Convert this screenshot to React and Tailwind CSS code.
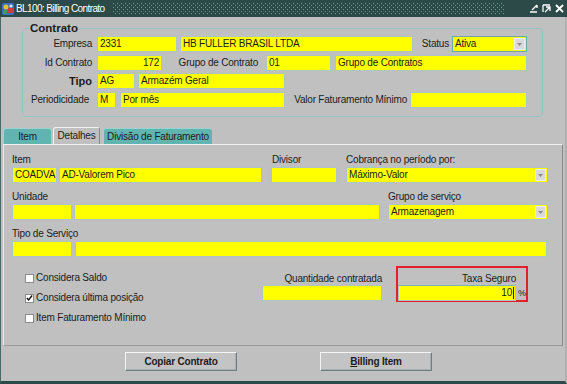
import React from "react";

const fieldBase =
  "h-[16px] bg-[#ffff00] border border-[#b0c4c4] flex items-center px-[2px] leading-none whitespace-nowrap overflow-hidden";

function Field({ className = "", children }) {
  return <div className={`${fieldBase} ${className}`}>{children}</div>;
}

function Select({ className = "", children, outline = "border-[#b0c4c4]" }) {
  return (
    <div
      className={`h-[16px] bg-[#ffff00] border ${outline} flex items-center pl-[2px] pr-[1px] leading-none whitespace-nowrap ${className}`}
    >
      <span className="flex-1">{children}</span>
      <span className="w-[11px] h-[12px] bg-[#d9d9d9] border border-[#eeeeee] flex items-center justify-center">
        <svg width="5" height="3" viewBox="0 0 5 3">
          <path d="M0 0 L5 0 L2.5 3 Z" fill="#8a8a8a" />
        </svg>
      </span>
    </div>
  );
}

function Label({ className = "", children }) {
  return (
    <div className={`h-[16px] flex items-center leading-none whitespace-nowrap ${className}`}>
      {children}
    </div>
  );
}

function Check({ checked, children }) {
  return (
    <div className="h-[20px] flex items-center">
      <span className="w-[9px] h-[9px] bg-white border border-[#8c8c8c] flex items-center justify-center">
        {checked && (
          <svg width="8" height="8" viewBox="0 0 8 8">
            <path d="M1 4 L3 6.3 L7 1.2" stroke="#111" strokeWidth="1.6" fill="none" />
          </svg>
        )}
      </span>
      <span className="ml-[2px] leading-none">{children}</span>
    </div>
  );
}

function AppIcon() {
  return (
    <svg width="12" height="12" viewBox="0 0 12 12">
      <rect x="0" y="0" width="12" height="12" rx="2" fill="#3d6fc4" />
      <circle cx="4" cy="4" r="2.5" fill="#e8c030" />
      <rect x="6" y="5" width="5" height="5" fill="#d03a3a" />
      <rect x="1" y="7" width="4" height="4" fill="#3aa050" />
      <circle cx="9" cy="3" r="1.5" fill="#e8e8ff" />
    </svg>
  );
}

function TitleBar() {
  return (
    <div className="h-[17px] shrink-0 bg-[#2c4a47] flex items-center pl-[2px] pr-[3px]">
      <AppIcon />
      <span className="ml-[2px] text-white text-[10px] tracking-[-0.6px] leading-none">
        BL100: Billing Contrato
      </span>
      <svg className="ml-[8px] flex-1 h-[11px]" preserveAspectRatio="none">
        <defs>
          <pattern id="dots" width="4" height="4" patternUnits="userSpaceOnUse">
            <rect x="0" y="0" width="1" height="1" fill="#6f9a96" />
            <rect x="2" y="2" width="1" height="1" fill="#6f9a96" />
          </pattern>
        </defs>
        <rect width="100%" height="100%" fill="url(#dots)" />
      </svg>
      <div className="ml-[24px] flex items-center gap-[4px]">
        <svg width="9" height="9" viewBox="0 0 9 9">
          <path d="M1 8 H8 M3 6 L8 1 M8 1 V4" stroke="#fff" strokeWidth="1.4" fill="none" />
        </svg>
        <svg width="9" height="9" viewBox="0 0 9 9">
          <path d="M1 1 H8 M1 1 V8 M3 8 L8 3 M4 3 H8 V7" stroke="#fff" strokeWidth="1.3" fill="none" />
        </svg>
        <svg width="9" height="9" viewBox="0 0 9 9">
          <path d="M1 1 L8 8 M8 1 L1 8" stroke="#fff" strokeWidth="1.8" fill="none" />
        </svg>
      </div>
    </div>
  );
}

function ContratoBox() {
  return (
    <div className="relative ml-[21px] mt-[11px] w-[521px] h-[89px] border border-[#92c6c4] rounded-[4px] pt-[7px]">
      <span className="absolute left-[6px] top-[-8px] px-[1px] bg-[#c0c0c0] font-bold text-[11.5px] tracking-[0px] leading-[14px]">
        Contrato
      </span>
      <div className="flex items-center">
        <Label className="w-[74px] justify-end pr-[5px]">Empresa</Label>
        <Field className="w-[80px]">2331</Field>
        <Field className="w-[233px] ml-[3px]">HB FULLER BRASIL LTDA</Field>
        <Label className="w-[39px] justify-end pr-[3px]">Status</Label>
        <Select className="w-[75px]" outline="border-[#6ea8a8]">Ativa</Select>
      </div>
      <div className="flex items-center mt-[3px]">
        <Label className="w-[74px] justify-end pr-[5px]">Id Contrato</Label>
        <Field className="w-[65px] justify-end">172</Field>
        <Label className="w-[104px] justify-end pr-[8px]">Grupo de Contrato</Label>
        <Field className="w-[65px]">01</Field>
        <Field className="w-[192px] ml-[4px]">Grupo de Contratos</Field>
      </div>
      <div className="flex items-center mt-[2px]">
        <Label className="w-[74px] justify-end pr-[5px] font-bold text-[11px] tracking-[0px]">Tipo</Label>
        <Field className="w-[38px]">AG</Field>
        <Field className="w-[147px] ml-[3px]">Armazém Geral</Field>
      </div>
      <div className="flex items-center mt-[3px]">
        <Label className="w-[74px] justify-end pr-[8px]">Periodicidade</Label>
        <Field className="w-[19px]">M</Field>
        <Field className="w-[165px] ml-[4px]">Por mês</Field>
        <Label className="w-[125px] justify-end pr-[3px]">Valor Faturamento Mínimo</Label>
        <Field className="w-[117px]"></Field>
      </div>
    </div>
  );
}

function Tabs() {
  return (
    <div className="ml-[2px] mt-[10px] h-[17px] flex items-end">
      <div className="w-[48px] h-[16px] bg-[#62b4b1] border-t border-l border-[#9ad4d2] rounded-t-[3px] flex items-center justify-center leading-none">
        Item
      </div>
      <div className="w-[47px] h-[17px] ml-[2px] bg-[#c0c0c0] border-t border-l border-r border-t-[#f2f2f2] border-l-[#f2f2f2] border-r-[#8a8a8a] rounded-t-[3px] flex items-center justify-center leading-none">
        Detalhes
      </div>
      <div className="w-[109px] h-[16px] ml-[3px] bg-[#62b4b1] border-t border-l border-[#9ad4d2] rounded-t-[3px] flex items-center justify-center leading-none whitespace-nowrap">
        Divisão de Faturamento
      </div>
    </div>
  );
}

function Detalhes() {
  return (
    <div className="ml-[2px] w-[560px] h-[202px] border border-t-[#f2f2f2] border-l-[#e8e8e8] border-r-[#8a8a8a] border-b-[#9a9a9a] pl-[8px] pt-[9px]">
      <div className="flex">
        <div className="w-[259px]">
          <div className="h-[12px] leading-[12px] mb-[1px]">Item</div>
          <div className="flex">
            <Field className="w-[45px] px-[1px]">COADVA</Field>
            <Field className="w-[203px] ml-[2px]">AD-Valorem Pico</Field>
          </div>
        </div>
        <div className="w-[75px]">
          <div className="h-[12px] leading-[12px] mb-[1px] pl-[1px]">Divisor</div>
          <Field className="w-[66px]"></Field>
        </div>
        <div>
          <div className="h-[12px] leading-[12px] mb-[1px]">Cobrança no período por:</div>
          <Select className="w-[202px]">Máximo-Valor</Select>
        </div>
      </div>

      <div className="flex mt-[8px]">
        <div className="w-[376px]">
          <div className="h-[12px] leading-[12px] mb-[1px]">Unidade</div>
          <div className="flex">
            <Field className="w-[60px]"></Field>
            <Field className="w-[306px] ml-[2px]"></Field>
          </div>
        </div>
        <div>
          <div className="h-[12px] leading-[12px] mb-[1px]">Grupo de serviço</div>
          <Select className="w-[160px]">Armazenagem</Select>
        </div>
      </div>

      <div className="mt-[8px]">
        <div className="h-[12px] leading-[12px] mb-[1px]">Tipo de Serviço</div>
        <div className="flex">
          <Field className="w-[60px]"></Field>
          <Field className="w-[472px] ml-[3px]"></Field>
        </div>
      </div>

      <div className="flex mt-[9px]">
        <div className="ml-[13px] w-[237px] pt-[2px]">
          <Check>Considera Saldo</Check>
          <Check checked>Considera última posição</Check>
          <Check>Item Faturamento Mínimo</Check>
        </div>
        <div className="w-[134px] pt-[7px]">
          <div className="w-[120px] h-[12px] leading-[12px] text-right">Quantidade contratada</div>
          <Field className="w-[120px]"></Field>
        </div>
        <div className="w-[132px] h-[36px] border-2 border-[#e2222b] pt-[5px]">
          <div className="h-[12px] leading-[12px] text-right pr-[10px]">Taxa Seguro</div>
          <div className="flex items-center">
            <Field className="w-[118px] justify-end pr-[1px] border-t-[#7fb4b4]">
              10<span className="ml-[1px] w-[1px] h-[12px] bg-[#222]" />
            </Field>
            <span className="ml-[2px] text-[9px] leading-none">%</span>
          </div>
        </div>
      </div>
    </div>
  );
}

function Btn({ className = "", children }) {
  return (
    <div
      className={`w-[112px] h-[19px] bg-[#c4c4c4] border border-t-[#f4f4f4] border-l-[#f4f4f4] border-r-[#6f7d7d] border-b-[#6f7d7d] shadow-[inset_-1px_-1px_0_#a6b0b0] flex items-center justify-center font-bold leading-none ${className}`}
    >
      {children}
    </div>
  );
}

export default function App() {
  return (
    <div className="w-[567px] h-[384px] bg-[#c0c0c0] overflow-hidden flex flex-col text-[10px] tracking-[-0.2px] text-[#1c1c1c] font-[family-name:Liberation_Sans,Arial,sans-serif]">
      <TitleBar />
      <div className="flex-1 flex flex-col border-l border-[#4a6866] border-b-[3px] border-b-[#2c4a47] border-r-[2px] border-r-[#b0b0b0]">
        <ContratoBox />
        <Tabs />
        <Detalhes />
        <div className="flex mt-[6px]">
          <Btn className="ml-[124px]">Copiar Contrato</Btn>
          <Btn className="ml-[83px]">
            <span className="underline">B</span>illing Item
          </Btn>
        </div>
      </div>
    </div>
  );
}
